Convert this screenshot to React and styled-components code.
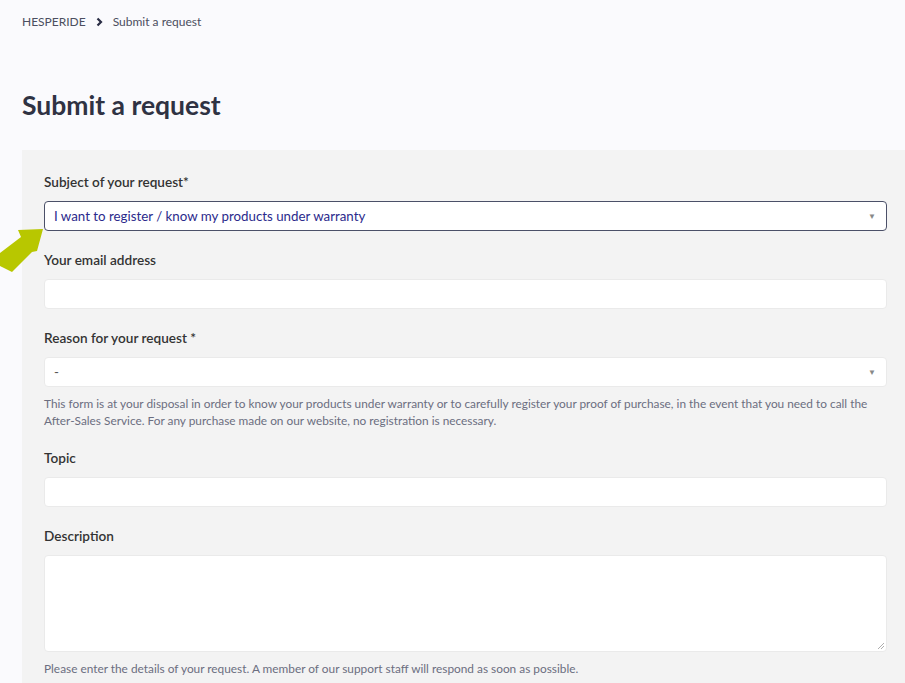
import styled, { createGlobalStyle } from "styled-components";

const GlobalStyle = createGlobalStyle`
  html, body {
    margin: 0;
    padding: 0;
    background: #fafafd;
    font-family: Lato, "Open Sans", sans-serif;
    overflow: hidden;
  }
`;

const Page = styled.div`
  position: relative;
  padding: 12px 0 0 22px;
  width: 883px;
`;

const Crumbs = styled.nav`
  display: flex;
  align-items: center;
  gap: 10px;
  font-size: 12px;
  line-height: 20px;
  color: #4b4e60;
`;

const Chevron = styled.svg`
  width: 7px;
  height: 10px;
  margin-bottom: 1px;
`;

const Title = styled.h1`
  margin: 56px 0 0;
  font-size: 26.5px;
  line-height: 34px;
  font-weight: 700;
  color: #2f3243;
`;

const Panel = styled.form`
  margin-top: 28px;
  background: #f3f3f3;
  padding: 22px 18px 22px 22px;
`;

const Field = styled.div`
  display: flex;
  flex-direction: column;
  & + & {
    margin-top: 19px;
  }
`;

const Label = styled.label`
  font-size: 13.6px;
  line-height: 20px;
  font-weight: 600;
  color: #333333;
  margin-bottom: 9px;
`;

const Box = styled.div`
  position: relative;
  height: ${({ h }) => h || 30}px;
  box-sizing: border-box;
  background: #ffffff;
  border: 1px solid ${({ active }) => (active ? "#4b5068" : "#eaeaea")};
  border-radius: 4px;
  display: flex;
  align-items: center;
  padding: 0 9px;
  font-size: 13.3px;
  color: ${({ active }) => (active ? "#2b2a8c" : "#555")};
`;

const Caret = styled.span`
  position: absolute;
  right: 10px;
  top: 50%;
  transform: translateY(-50%);
  font-size: 8px;
  color: #888;
`;

const Grip = styled.svg`
  position: absolute;
  right: 1px;
  bottom: 1px;
  width: 8px;
  height: 8px;
`;

const Help = styled.p`
  margin: 8px 0 0;
  font-size: 11.85px;
  line-height: 17px;
  color: #6b6e80;
`;

const Arrow = styled.svg`
  position: absolute;
  left: 0;
  top: 226px;
  width: 46px;
  height: 48px;
`;

export default function App() {
  return (
    <>
      <GlobalStyle />
      <Page>
        <Crumbs>
          <span>HESPERIDE</span>
          <Chevron viewBox="0 0 7 10">
            <path d="M1.5 1.5 L5 5 L1.5 8.5" fill="none" stroke="#2a2d45" strokeWidth="2.2" />
          </Chevron>
          <span>Submit a request</span>
        </Crumbs>
        <Title>Submit a request</Title>
        <Panel>
          <Field>
            <Label>Subject of your request*</Label>
            <Box active>
              I want to register / know my products under warranty
              <Caret>▼</Caret>
            </Box>
          </Field>
          <Field>
            <Label>Your email address</Label>
            <Box />
          </Field>
          <Field>
            <Label>Reason for your request *</Label>
            <Box>
              -
              <Caret>▼</Caret>
            </Box>
            <Help>
              This form is at your disposal in order to know your products under warranty or to carefully register your proof of purchase, in the event that you need to call the After-Sales Service. For any purchase made on our website, no registration is necessary.
            </Help>
          </Field>
          <Field>
            <Label>Topic</Label>
            <Box />
          </Field>
          <Field>
            <Label>Description</Label>
            <Box h={97}>
              <Grip viewBox="0 0 8 8">
                <path d="M1 7 L7 1 M4 7 L7 4" stroke="#999" strokeWidth="0.8" />
              </Grip>
            </Box>
            <Help>
              Please enter the details of your request. A member of our support staff will respond as soon as possible.
            </Help>
          </Field>
        </Panel>
        <Arrow viewBox="0 0 46 48">
          <polygon points="43,3 37,25 32,26 12,46 0,40 0,27 21,11 18,4" fill="#b8c700" />
        </Arrow>
      </Page>
    </>
  );
}
